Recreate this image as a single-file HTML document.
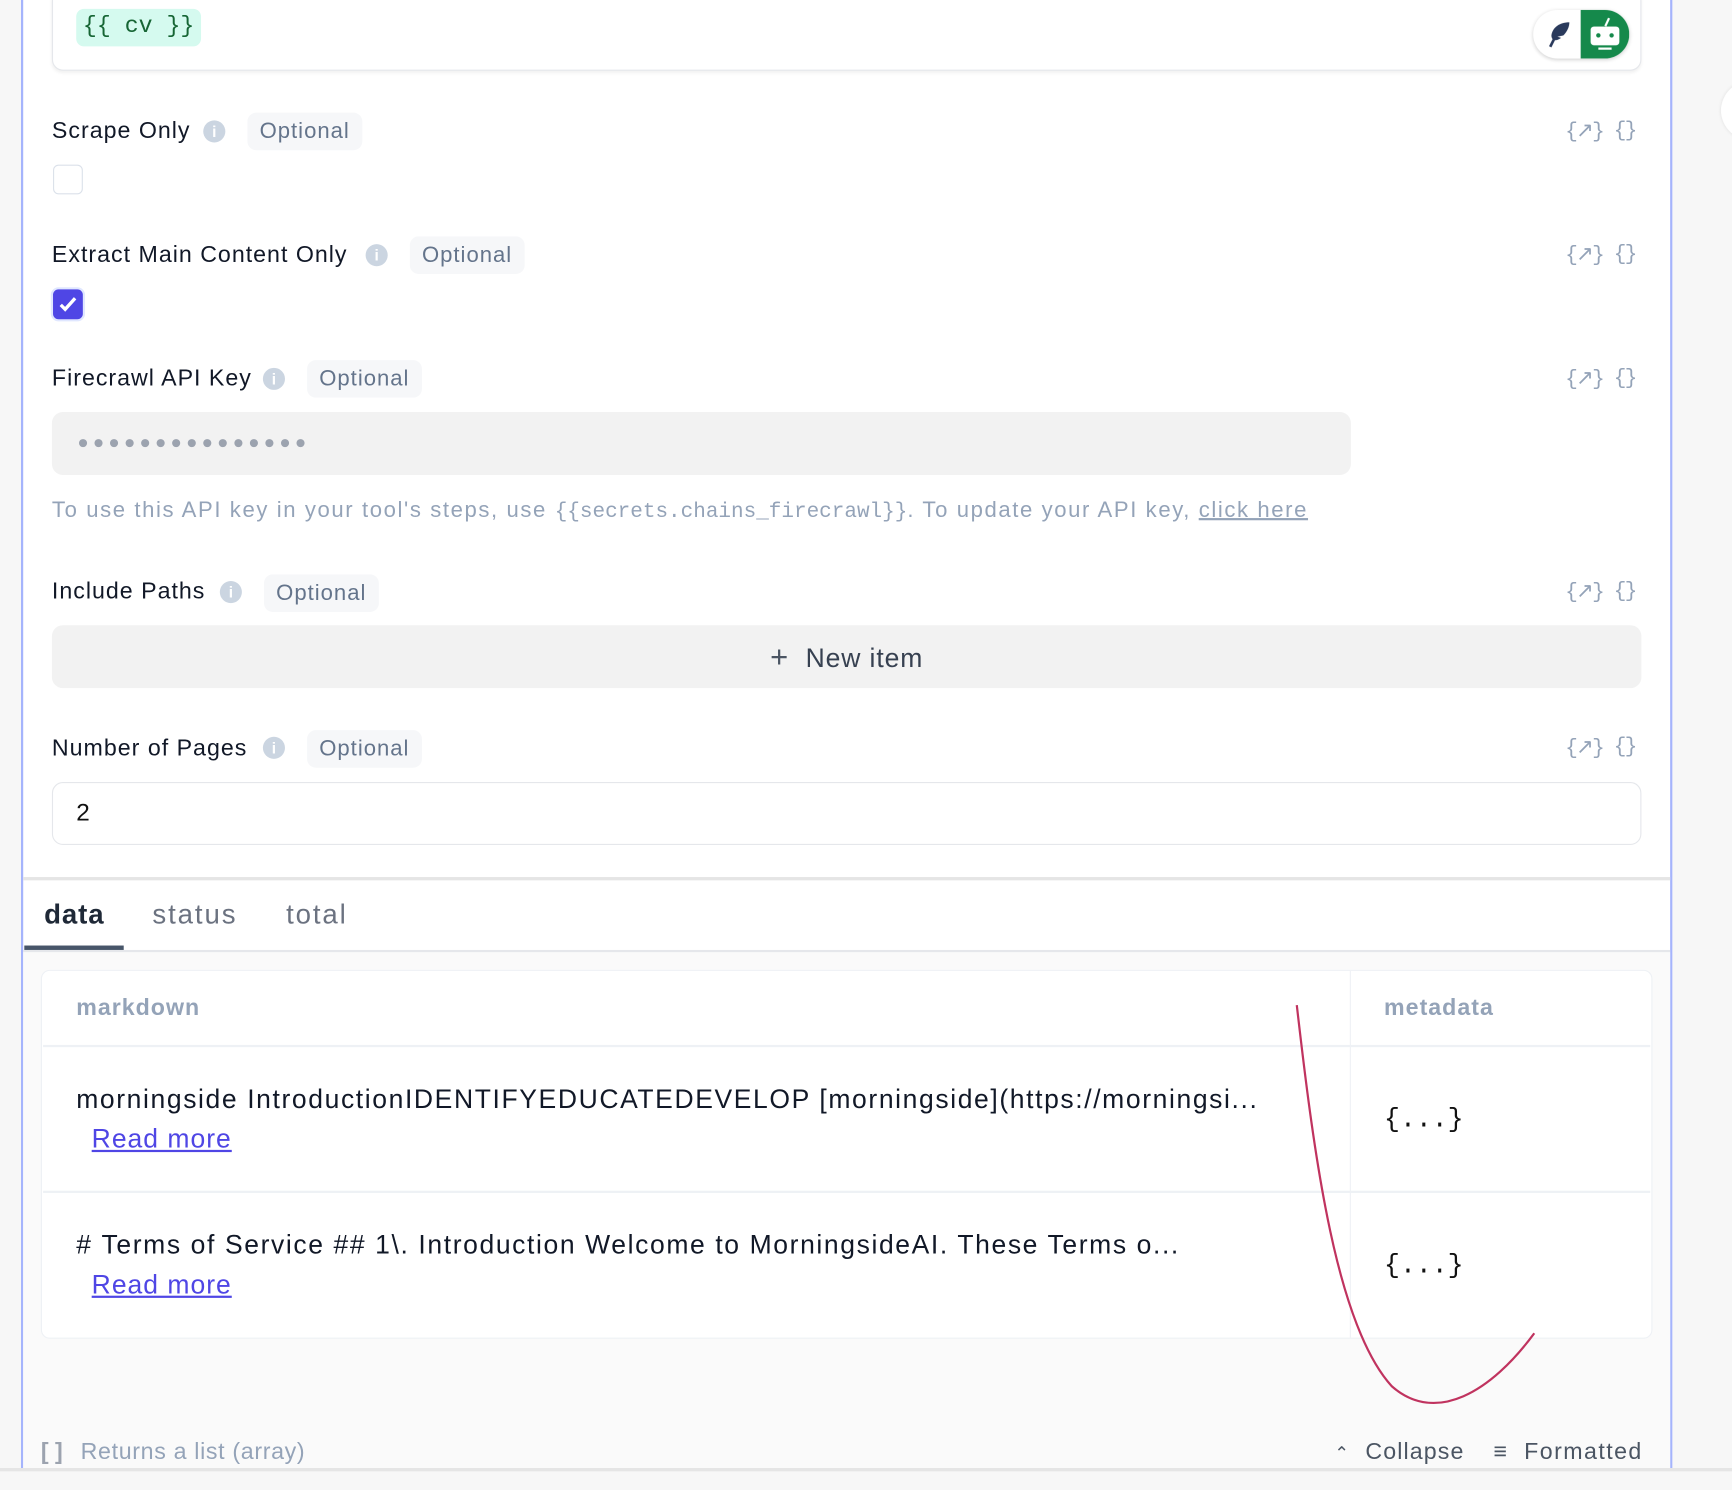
<!DOCTYPE html>
<html><head><meta charset="utf-8"><style>
html,body{margin:0;padding:0;width:1732px;height:1490px;overflow:hidden;background:#f7f7f7;font-family:"Liberation Sans",sans-serif}
#w{position:absolute;left:0;top:0;width:1568px;height:1349px;transform:scale(1.10459);transform-origin:0 0;background:#f7f7f7}
.a{position:absolute;white-space:nowrap}
.lbl{font-size:21px;color:#111827;line-height:24px;letter-spacing:0.9px}
.info{position:absolute;width:20px;height:20px;border-radius:50%;background:#cbd5e1;color:#fff;font-size:14px;font-weight:bold;text-align:center;line-height:20px}
.opt{position:absolute;height:34px;line-height:34px;padding:0 11px;background:#f6f7f9;border-radius:8px;color:#64748b;font-size:20px;letter-spacing:0.9px}
.ic{position:absolute;color:#94a3b8;font-size:19px;font-family:"Liberation Mono",monospace;letter-spacing:-1.5px}
</style></head><body><div id="w">
<div class="a" style="left:19px;top:0;width:1495px;height:1330px;background:#fff;border-left:2px solid #a5b4fc;border-right:2px solid #a5b4fc;box-sizing:border-box"></div>
<div class="a" style="left:21px;top:862px;width:1491px;height:468px;background:#fafafa"></div>
<div class="a" style="left:1558px;top:72px;width:60px;height:56px;border-radius:50%;background:#fff;box-shadow:0 0 3px #ddd"></div>
<div class="a" style="left:47px;top:-10px;width:1439px;height:74px;border:1px solid #e5e7eb;border-radius:10px;box-shadow:0 2px 3px rgba(0,0,0,.06);background:#fff;box-sizing:border-box"></div>
<div class="a" style="left:69px;top:8px;width:113px;height:34px;background:#d5faef;border-radius:7px;color:#166534;font-family:'Liberation Mono',monospace;font-size:21px;line-height:34px;text-align:center">{{ cv }}</div>
<div class="a" style="left:1388px;top:9px;width:87px;height:44px;border-radius:22px;background:#fff;box-shadow:0 1px 4px rgba(0,0,0,.2);overflow:hidden">
 <div class="a" style="left:43px;top:0;width:44px;height:44px;background:#15894b"></div>
 <svg class="a" style="left:10px;top:9px" width="26" height="26" viewBox="0 0 24 24"><path d="M21 2C13 2 7 6 6 13c0 2 1 3 1 3l-3 6 2 1 3-6c2 0 4-1 5-2l-3-1 5-1c3-3 5-7 5-11z" fill="#2a3a5c"/></svg>
 <div class="a" style="left:52px;top:15px;width:26px;height:17px;background:#fff;border-radius:3px"></div>
 <div class="a" style="left:57px;top:21px;width:4px;height:4px;background:#15894b;border-radius:50%"></div>
 <div class="a" style="left:69px;top:21px;width:4px;height:4px;background:#15894b;border-radius:50%"></div>
 <div class="a" style="left:59px;top:34px;width:12px;height:2px;background:#fff"></div>
 <div class="a" style="left:66px;top:7px;width:2px;height:8px;background:#fff;transform:rotate(25deg)"></div>
</div>
<div class="a lbl" style="left:47px;top:107px">Scrape Only</div>
<div class="info" style="left:184px;top:109px">i</div>
<div class="opt" style="left:224px;top:102px">Optional</div>
<div class="ic" style="left:1417px;top:107px">{↗}</div><div class="ic" style="left:1461px;top:107px">{}</div>
<div class="a" style="left:48px;top:149px;width:25px;height:25px;border:1.5px solid #dbe1ea;border-radius:5px"></div>
<div class="a lbl" style="left:47px;top:219px">Extract Main Content Only</div>
<div class="info" style="left:331px;top:221px">i</div>
<div class="opt" style="left:371px;top:214px">Optional</div>
<div class="ic" style="left:1417px;top:219px">{↗}</div><div class="ic" style="left:1461px;top:219px">{}</div>
<div class="a" style="left:48px;top:262px;width:27px;height:27px;background:#4f46e5;border-radius:5px;box-shadow:0 0 0 2px #e0e7ff"><svg width="27" height="27"><path d="M7 14l4 4 9-10" stroke="#fff" stroke-width="3" fill="none"/></svg></div>
<div class="a lbl" style="left:47px;top:331px">Firecrawl API Key</div>
<div class="info" style="left:238px;top:333px">i</div>
<div class="opt" style="left:278px;top:326px">Optional</div>
<div class="ic" style="left:1417px;top:331px">{↗}</div><div class="ic" style="left:1461px;top:331px">{}</div>
<div class="a" style="left:47px;top:373px;width:1176px;height:57px;background:#f2f2f2;border-radius:10px"></div>
<div class="a" style="left:70px;top:391px;font-size:17px;color:#9ca3af;letter-spacing:3.8px">●●●●●●●●●●●●●●●</div>
<div class="a" style="left:47px;top:451px;font-size:20px;color:#94a3b8;letter-spacing:1.45px">To use this API key in your tool's steps, use <span style="font-family:'Liberation Mono',monospace;font-size:19px;letter-spacing:0">{{secrets.chains_firecrawl}}</span>. To update your API key, <span style="text-decoration:underline">click here</span></div>
<div class="a lbl" style="left:47px;top:524px">Include Paths</div>
<div class="info" style="left:199px;top:526px">i</div>
<div class="opt" style="left:239px;top:520px">Optional</div>
<div class="ic" style="left:1417px;top:524px">{↗}</div><div class="ic" style="left:1461px;top:524px">{}</div>
<div class="a" style="left:47px;top:566px;width:1439px;height:57px;background:#f2f2f2;border-radius:10px;text-align:center;line-height:57px;font-size:24px;color:#374151;letter-spacing:0.8px"><span style="font-size:28px;color:#4b5563">+</span>&nbsp; New item</div>
<div class="a lbl" style="left:47px;top:666px">Number of Pages</div>
<div class="info" style="left:238px;top:667px">i</div>
<div class="opt" style="left:278px;top:661px">Optional</div>
<div class="ic" style="left:1417px;top:665px">{↗}</div><div class="ic" style="left:1461px;top:665px">{}</div>
<div class="a" style="left:47px;top:708px;width:1439px;height:57px;border:1.5px solid #e5e7eb;border-radius:10px;box-sizing:border-box;font-size:22px;line-height:54px;padding-left:21px;color:#111">2</div>
<div class="a" style="left:21px;top:794px;width:1491px;height:3px;background:#e5e5e5"></div>
<div class="a" style="left:40px;top:814px;font-size:25px;color:#1f2937;font-weight:bold;letter-spacing:0.8px">data</div>
<div class="a" style="left:138px;top:814px;font-size:25px;color:#6b7280;letter-spacing:1.7px">status</div>
<div class="a" style="left:259px;top:814px;font-size:25px;color:#6b7280;letter-spacing:1.7px">total</div>
<div class="a" style="left:21px;top:860px;width:1491px;height:2px;background:#e5e7eb"></div>
<div class="a" style="left:22px;top:856px;width:90px;height:4px;background:#475569"></div>
<div class="a" style="left:37px;top:878px;width:1459px;height:334px;background:#fff;border:1.5px solid #eef1f5;border-radius:8px;box-sizing:border-box"></div>
<div class="a" style="left:1222px;top:879px;width:1px;height:332px;background:#eef1f5"></div>
<div class="a" style="left:39px;top:946px;width:1455px;height:2px;background:#eef1f5"></div>
<div class="a" style="left:39px;top:1078px;width:1455px;height:2px;background:#eef1f5"></div>
<div class="a" style="left:69px;top:901px;font-size:21px;color:#94a3b8;font-weight:bold;letter-spacing:0.9px">markdown</div>
<div class="a" style="left:1253px;top:901px;font-size:21px;color:#94a3b8;font-weight:bold;letter-spacing:0.9px">metadata</div>
<div class="a" style="left:69px;top:982px;font-size:24px;color:#111827;letter-spacing:1.45px">morningside IntroductionIDENTIFYEDUCATEDEVELOP [morningside](https://morningsi...</div>
<div class="a" style="left:83px;top:1018px;font-size:24px;color:#4f46e5;text-decoration:underline;letter-spacing:0.9px">Read more</div>
<div class="a" style="left:1253px;top:1001px;font-size:24px;font-family:'Liberation Mono',monospace;color:#111">{...}</div>
<div class="a" style="left:69px;top:1114px;font-size:24px;color:#111827;letter-spacing:1.45px">#&nbsp;Terms of Service ## 1\. Introduction Welcome to MorningsideAI. These Terms o...</div>
<div class="a" style="left:83px;top:1150px;font-size:24px;color:#4f46e5;text-decoration:underline;letter-spacing:0.9px">Read more</div>
<div class="a" style="left:1253px;top:1133px;font-size:24px;font-family:'Liberation Mono',monospace;color:#111">{...}</div>
<svg class="a" style="left:0;top:0" width="1568" height="1349"><path d="M1174 910 C1190 1050 1210 1200 1260 1255 C1300 1290 1350 1260 1389 1207" stroke="#c0335f" stroke-width="2" fill="none"/></svg>
<div class="a" style="left:37px;top:1303px;font-size:21px;color:#9ca3af;font-weight:bold">[&nbsp;]</div>
<div class="a" style="left:73px;top:1303px;font-size:21px;color:#94a3b8;letter-spacing:0.6px">Returns a list (array)</div>
<div class="a" style="left:1208px;top:1303px;font-size:21px;color:#4b5563;letter-spacing:1px"><span style="font-size:16px">⌃</span>&nbsp;&nbsp;Collapse</div>
<div class="a" style="left:1352px;top:1303px;font-size:21px;color:#4b5563;letter-spacing:1.3px">≡&nbsp;&nbsp;Formatted</div>
<div class="a" style="left:0;top:1329px;width:1568px;height:3px;background:#e5e5e5"></div>
</div></body></html>
